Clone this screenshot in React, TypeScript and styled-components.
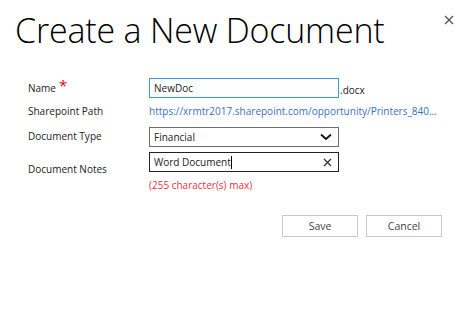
import React from "react";
import styled, { createGlobalStyle } from "styled-components";

const Global = createGlobalStyle`
  html, body { margin: 0; padding: 0; background: #fff; }
  body { font-family: "Open Sans", "Noto Sans", sans-serif; color: #222; }
`;

const Page = styled.div`
  width: 472px;
  height: 321px;
  position: relative;
  box-sizing: border-box;
  padding: 8px 0 0 15px;
`;

const Title = styled.h1`
  margin: 0;
  font-family: "Open Sans", sans-serif;
  font-weight: 300;
  font-size: 34px;
  line-height: 44px;
  color: #000;
  letter-spacing: -0.2px;
`;

const Close = styled.button`
  position: absolute;
  top: 13px;
  right: 16px;
  width: 14px;
  height: 14px;
  padding: 0;
  border: none;
  background: transparent;
  display: flex;
  align-items: center;
  justify-content: center;
`;

const Form = styled.div`
  margin-top: 26px;
  padding-left: 13px;
  display: grid;
  grid-template-columns: 121px 1fr;
  row-gap: 0;
`;

const Label = styled.div<{ $pt?: number }>`
  font-size: 10px;
  color: #222;
  padding-top: ${(p) => p.$pt ?? 0}px;
  display: flex;
  align-items: flex-start;
`;

const Star = styled.span`
  color: #e00;
  font-size: 15px;
  line-height: 10px;
  margin-left: 3px;
  margin-top: -1px;
`;

const Cell = styled.div<{ $h: number; $mb?: number }>`
  height: ${(p) => p.$h}px;
  margin-bottom: ${(p) => p.$mb ?? 0}px;
  display: flex;
  align-items: flex-start;
`;

const Field = styled.div<{ $border: string }>`
  width: 190px;
  height: 20px;
  box-sizing: border-box;
  border: 1px solid ${(p) => p.$border};
  display: flex;
  align-items: center;
  padding: 0 6px 0 4px;
  font-size: 10px;
  color: #222;
`;

const FieldText = styled.span`
  flex: 1;
  white-space: nowrap;
`;

const Caret = styled.span`
  display: inline-block;
  width: 1px;
  height: 13px;
  background: #000;
  vertical-align: middle;
`;

const Suffix = styled.span`
  font-size: 10px;
  margin-left: 1px;
  margin-top: 5px;
`;

const Link = styled.div`
  font-size: 10px;
  color: #3a6fc8;
  white-space: nowrap;
`;

const ErrorText = styled.div`
  font-size: 10px;
  color: #f0303a;
  margin-top: 2px;
`;

const Buttons = styled.div`
  display: flex;
  justify-content: flex-end;
  gap: 8px;
  margin-top: 23px;
  margin-right: 30px;
`;

const Button = styled.button`
  width: 76px;
  height: 22px;
  box-sizing: border-box;
  border: 1px solid #c8c8c8;
  background: #fff;
  font-family: "Open Sans", sans-serif;
  font-size: 10.5px;
  color: #444;
  padding: 0;
`;

export default function App() {
  return (
    <>
      <Global />
      <Page>
        <Title>Create a New Document</Title>
        <Close aria-label="Close">
          <svg width="10" height="10" viewBox="0 0 10 10">
            <path d="M1 1 L9 9 M9 1 L1 9" stroke="#555" strokeWidth="1.4" />
          </svg>
        </Close>
        <Form>
          <Label $pt={3}>
            Name<Star>*</Star>
          </Label>
          <Cell $h={20} $mb={6}>
            <Field $border="#3a9fd8">
              <FieldText>NewDoc</FieldText>
            </Field>
            <Suffix>.docx</Suffix>
          </Cell>

          <Label $pt={0}>Sharepoint Path</Label>
          <Cell $h={15} $mb={8}>
            <Link>https://xrmtr2017.sharepoint.com/opportunity/Printers_840...</Link>
          </Cell>

          <Label $pt={2}>Document Type</Label>
          <Cell $h={20} $mb={5}>
            <Field $border="#6e6e6e">
              <FieldText>Financial</FieldText>
              <svg width="12" height="8" viewBox="0 0 12 8">
                <path d="M1 1.5 L6 6 L11 1.5" stroke="#111" strokeWidth="1.8" fill="none" />
              </svg>
            </Field>
          </Cell>

          <Label $pt={10}>Document Notes</Label>
          <Cell $h={20}>
            <Field $border="#222">
              <FieldText>
                Word Document<Caret />
              </FieldText>
              <svg width="9" height="9" viewBox="0 0 9 9">
                <path d="M1 1 L8 8 M8 1 L1 8" stroke="#333" strokeWidth="1.3" />
              </svg>
            </Field>
          </Cell>

          <div />
          <ErrorText>(255 character(s) max)</ErrorText>
        </Form>
        <Buttons>
          <Button>Save</Button>
          <Button>Cancel</Button>
        </Buttons>
      </Page>
    </>
  );
}
